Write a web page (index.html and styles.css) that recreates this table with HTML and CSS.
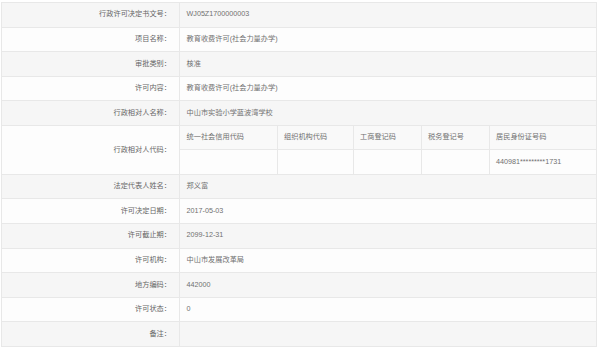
FILE: index.html
```html
<!DOCTYPE html>
<html lang="zh-CN">
<head>
<meta charset="utf-8">
<title>行政许可信息</title>
<link rel="stylesheet" href="styles.css">
</head>
<body>
<table class="info">
  <colgroup><col class="col-label"><col></colgroup>
  <tbody>
    <tr><th>行政许可决定书文号：</th><td>WJ05Z1700000003</td></tr>
    <tr><th>项目名称：</th><td>教育收费许可(社会力量办学)</td></tr>
    <tr><th>审批类别：</th><td>核准</td></tr>
    <tr><th>许可内容：</th><td>教育收费许可(社会力量办学)</td></tr>
    <tr><th>行政相对人名称：</th><td>中山市实验小学蓝波湾学校</td></tr>
    <tr class="nested-row">
      <th>行政相对人代码：</th>
      <td class="nested-cell">
        <table class="codes">
          <colgroup>
            <col class="c1"><col class="c2"><col class="c3"><col class="c4"><col>
          </colgroup>
          <tr class="codes-head">
            <td>统一社会信用代码</td><td>组织机构代码</td><td>工商登记码</td><td>税务登记号</td><td>居民身份证号码</td>
          </tr>
          <tr>
            <td></td><td></td><td></td><td></td><td>440981*********1731</td>
          </tr>
        </table>
      </td>
    </tr>
    <tr><th>法定代表人姓名：</th><td>郑义富</td></tr>
    <tr><th>许可决定日期：</th><td>2017-05-03</td></tr>
    <tr><th>许可截止期：</th><td>2099-12-31</td></tr>
    <tr><th>许可机构：</th><td>中山市发展改革局</td></tr>
    <tr><th>地方编码：</th><td>442000</td></tr>
    <tr><th>许可状态：</th><td>0</td></tr>
    <tr><th>备注：</th><td></td></tr>
  </tbody>
</table>
</body>
</html>
```

FILE: styles.css
```css
html, body {
  margin: 0;
  padding: 0;
  background: #ffffff;
}

body {
  font-family: "Liberation Sans", "Noto Sans CJK SC", sans-serif;
  font-size: 7.2px;
  color: #707070;
}

.info {
  margin: 2px 0 0 1px;
  width: 596px;
  border-collapse: collapse;
  table-layout: fixed;
}

.col-label {
  width: 178px;
}

.info > tbody > tr {
  height: 24.55px;
  background: #fdfdfd;
}

.info > tbody > tr:nth-child(odd) {
  background: #f6f6f6;
}

.info th,
.info td {
  border: 1px solid #e8e8e8;
  padding: 0 6px;
  vertical-align: middle;
  line-height: 1.2;
}

.info th {
  font-weight: normal;
  text-align: right;
  color: #666666;
  padding-right: 8px;
}

.info td {
  text-align: left;
  padding-left: 6.5px;
}

.info .nested-cell {
  padding: 0;
}

.codes {
  width: 100%;
  border-collapse: collapse;
  border-style: hidden;
  table-layout: fixed;
}

.codes .c1 { width: 97px; }
.codes .c2 { width: 76px; }
.codes .c3 { width: 68px; }
.codes .c4 { width: 68px; }

.codes tr {
  height: 24.1px;
  background: #fdfdfd;
}

.codes .codes-head {
  background: #f9f9f9;
}

.codes td {
  border: 1px solid #e8e8e8;
  padding: 0 6.5px;
  color: #707070;
}
```
